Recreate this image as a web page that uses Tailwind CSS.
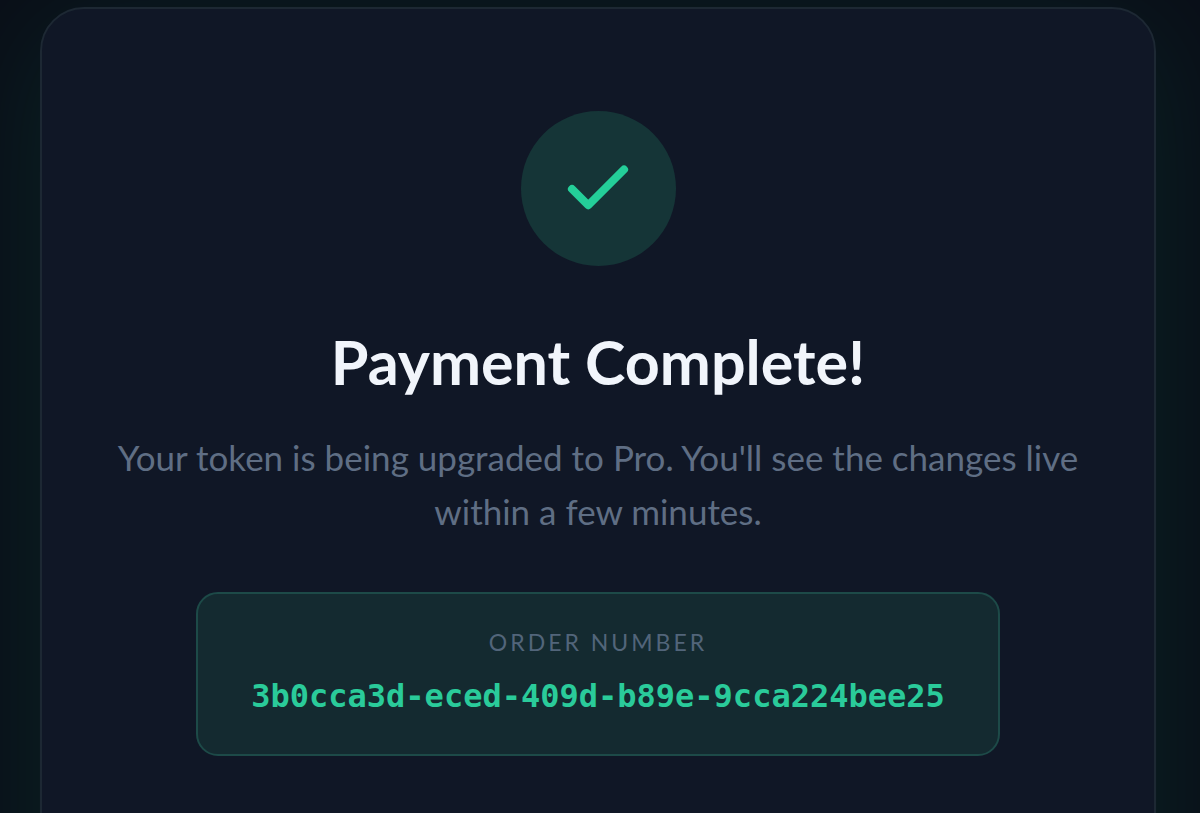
<!DOCTYPE html>
<html lang="en">
<head>
<meta charset="utf-8">
<meta name="viewport" content="width=device-width, initial-scale=1">
<title>Payment Complete</title>
<script src="https://cdn.jsdelivr.net/npm/@tailwindcss/browser@4"></script>
</head>
<body class="h-screen overflow-hidden bg-[#0a0f18] pt-[7px] pr-11 pl-10 font-['Lato',sans-serif]">
<main class="flex min-h-[120vh] flex-col items-center rounded-[44px] border-2 border-[#1d2833] bg-[#101726] px-[72px] pt-[102px] text-center shadow-[0_20px_120px_rgba(16,185,129,0.12)]">
  <div class="flex size-[155px] items-center justify-center rounded-full bg-[#153537]">
    <svg class="size-[78px]" viewBox="0 0 24 24" fill="none" stroke="#24cf99" stroke-width="2.5" stroke-linecap="round" stroke-linejoin="round" aria-hidden="true"><path d="M20 6 9 17l-5-5"/></svg>
  </div>
  <h1 class="mt-[60px] text-[61px] leading-[72px] font-bold text-[#f1f5fb]">Payment Complete!</h1>
  <p class="mt-8 text-[35px] leading-[54px] text-[#5f6e84]">Your token is being upgraded to Pro. You'll see the changes live within a few minutes.</p>
  <section class="mt-[54px] rounded-[22px] border-2 border-[#1d4a48] bg-[#142a30] px-[53px] pt-[30px] pb-9" aria-labelledby="order-label">
    <h2 id="order-label" class="text-[23px] leading-[36px] tracking-[3px] text-[#52657a] uppercase">Order Number</h2>
    <p class="mt-[14px] font-['DejaVu_Sans_Mono',monospace] text-[32px] leading-[44px] font-bold text-[#2acb9a]">3b0cca3d-eced-409d-b89e-9cca224bee25</p>
  </section>
</main>
</body>
</html>
